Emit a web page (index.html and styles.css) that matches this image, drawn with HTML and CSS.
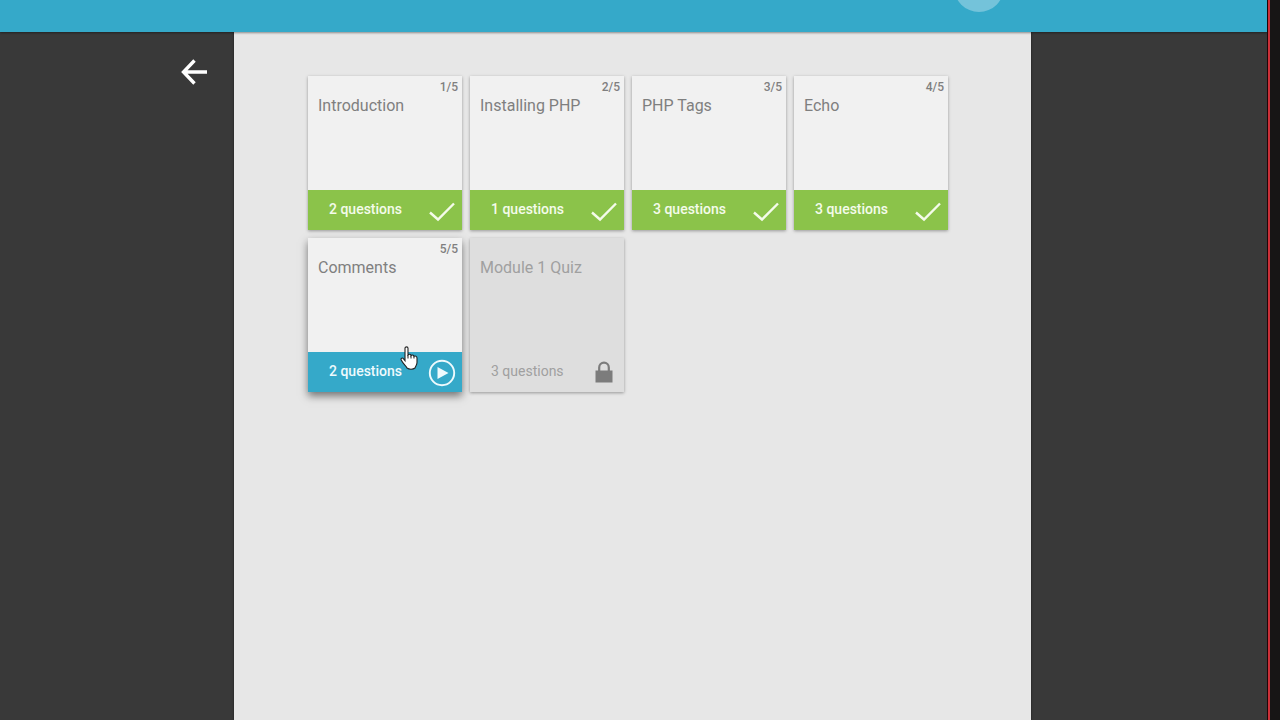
FILE: index.html
```html
<!DOCTYPE html>
<html lang="en">
  <head>
    <meta charset="utf-8">
    <title>Module 1</title>
    <link rel="stylesheet" href="styles.css">
  </head>
  <body>
    <svg class="defs" aria-hidden="true">
      <symbol id="check" viewBox="0 0 28 28">
        <path d="M2 15.5 L10 22.5 L26 6.5" fill="none" stroke="currentColor" stroke-width="2.4"/>
      </symbol>
      <symbol id="play" viewBox="0 0 28 28">
        <circle cx="14" cy="14" r="12.2" fill="none" stroke="currentColor" stroke-width="1.9"/>
        <path d="M9.5 8 L20.5 14 L9.5 20 Z" fill="currentColor"/>
      </symbol>
      <symbol id="lock" viewBox="0 0 28 28">
        <path d="M9.2 12 V8.5 a4.8 4.8 0 0 1 9.6 0 V12" fill="none" stroke="currentColor" stroke-width="2.2"/>
        <rect x="5.5" y="11.5" width="17" height="12" fill="currentColor"/>
      </symbol>
    </svg>

    <div class="app">
      <header class="topbar">
        <span class="avatar"></span>
      </header>
      <div class="stage">
        <nav class="side">
          <a class="back" href="#" aria-label="Back">
            <svg viewBox="0 0 28 28">
              <path d="M27 14 H4 M14.5 2.5 L3.5 14 L14.5 25.5" fill="none" stroke="currentColor" stroke-width="3.4"/>
            </svg>
          </a>
        </nav>
        <main class="panel">
          <div class="lessons">
            <a class="card done" href="#">
              <span class="body">
                <span class="count">1/5</span>
                <span class="title">Introduction</span>
              </span>
              <span class="foot">2 questions <svg class="icon"><use href="#check"/></svg></span>
            </a>
            <a class="card done" href="#">
              <span class="body">
                <span class="count">2/5</span>
                <span class="title">Installing PHP</span>
              </span>
              <span class="foot">1 questions <svg class="icon"><use href="#check"/></svg></span>
            </a>
            <a class="card done" href="#">
              <span class="body">
                <span class="count">3/5</span>
                <span class="title">PHP Tags</span>
              </span>
              <span class="foot">3 questions <svg class="icon"><use href="#check"/></svg></span>
            </a>
            <a class="card done" href="#">
              <span class="body">
                <span class="count">4/5</span>
                <span class="title">Echo</span>
              </span>
              <span class="foot">3 questions <svg class="icon"><use href="#check"/></svg></span>
            </a>
            <a class="card current" href="#">
              <span class="body">
                <span class="count">5/5</span>
                <span class="title">Comments</span>
              </span>
              <span class="foot">2 questions <svg class="icon"><use href="#play"/></svg></span>
              <svg class="pointer" viewBox="0 0 18 24">
                <path d="M5 2.2 C5 .4 8 .4 8 2.2 V9 C9 7.8 11 8.2 11 9.6 C12 8.6 14 9 14 10.4 C15.2 9.6 17 10.2 17 12 V16.5 C17 19 15.5 20 15 22 C13 23.6 9 23.6 7 22 C6 19.5 3.5 18.5 1.2 14 C.3 12.2 2.5 11.4 3.6 12.8 L5 14.6 Z" fill="#fff" stroke="#222" stroke-width="1.1"/>
                <path d="M8 9 V12.5 M11 9.6 V12.5 M14 10.4 V12.5" fill="none" stroke="#222"/>
              </svg>
            </a>
            <a class="card locked" href="#">
              <span class="body">
                <span class="count"></span>
                <span class="title">Module 1 Quiz</span>
              </span>
              <span class="foot">3 questions <svg class="icon"><use href="#lock"/></svg></span>
            </a>
          </div>
        </main>
      </div>
    </div>
  </body>
</html>
```
FILE: styles.css
```css
* {
  box-sizing: border-box;
}

body {
  margin: 0;
  min-height: 100vh;
  display: flex;
  background: #171515;
  font-family: Roboto, "Liberation Sans", sans-serif;
  color: #7f7f7f;
}

a {
  color: inherit;
  text-decoration: none;
}

.defs {
  position: absolute;
  width: 0;
  height: 0;
}

.app {
  flex: 1;
  display: flex;
  flex-direction: column;
  margin-right: 10px;
  border-right: 2px solid #cc3038;
  padding-right: 1px;
  background: #1c0809;
  overflow: hidden;
}

/* top bar */
.topbar {
  position: relative;
  z-index: 1;
  height: 32px;
  background: #35a9c9;
  box-shadow: 0 1px 2px rgba(0, 0, 0, 0.4);
}

.avatar {
  position: absolute;
  right: 263px;
  bottom: 20px;
  width: 50px;
  height: 50px;
  border-radius: 50%;
  background: #74c3da;
}

.stage {
  flex: 1;
  display: grid;
  grid-template-columns: minmax(64px, 1fr) minmax(0, 797px) minmax(64px, 1fr);
  padding-right: 2px;
  background: #393939;
}

.side {
  padding: 26px 26px 0 0;
}

.back {
  display: block;
  width: 28px;
  height: 28px;
  margin-left: auto;
  color: #fff;
}

.back svg {
  display: block;
}

.panel {
  padding: 44px 74px;
  background: #e7e7e7;
  box-shadow: 0 0 2px rgba(0, 0, 0, 0.6);
}

/* lesson cards */
.lessons {
  display: grid;
  grid-template-columns: repeat(auto-fill, 154px);
  gap: 8px;
}

.card {
  position: relative;
  display: flex;
  flex-direction: column;
  height: 154px;
  background: #f1f1f1;
  box-shadow: 0 1px 3px rgba(0, 0, 0, 0.35);
}

.body {
  flex: 1;
  display: flex;
  flex-direction: column;
  padding: 3px 4px 0 10px;
}

.count {
  height: 16px;
  font-size: 12px;
  font-weight: 500;
  line-height: 16px;
  text-align: right;
}

.title {
  font-size: 16px;
  line-height: 22px;
}

.foot {
  display: flex;
  align-items: center;
  justify-content: space-between;
  height: 40px;
  padding: 0 6px 2px 21px;
  font-size: 14px;
  font-weight: 500;
  color: #f4fbea;
}

.icon {
  width: 28px;
  height: 28px;
  margin-top: 4px;
}

.done .foot {
  background: #8bc34a;
}

.current {
  box-shadow: 0 4px 8px rgba(0, 0, 0, 0.5);
}

.current .foot {
  background: #35a9c9;
  color: #eefafd;
}

.locked {
  background: #dedede;
  color: #a0a0a0;
}

.locked .foot {
  color: #a0a0a0;
  font-weight: 400;
}

.locked .icon {
  color: #7c7c7c;
}

/* hand pointer over the hovered card */
.pointer {
  position: absolute;
  left: 92px;
  top: 108px;
  width: 18px;
  height: 24px;
}
```
